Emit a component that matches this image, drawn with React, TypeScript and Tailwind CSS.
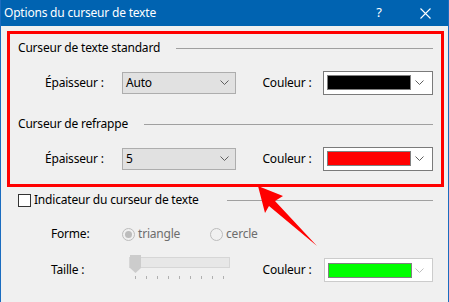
import React from "react";

const Chevron = ({ color = "#5f5f5f" }: { color?: string }) => (
  <svg width="9" height="5" viewBox="0 0 9 5" className="shrink-0">
    <polyline points="0.5,0.5 4.5,4.5 8.5,0.5" fill="none" stroke={color} strokeWidth="1" />
  </svg>
);

const SelectBox = ({ value }: { value: string }) => (
  <div className="w-[115px] h-[22px] bg-[#e1e1e1] border border-[#adadad] flex items-center pl-[3px] pr-[6px]">
    <span className="flex-1 text-black">{value}</span>
    <Chevron />
  </div>
);

const ColorBox = ({ color, disabled }: { color: string; disabled?: boolean }) => (
  <div
    className={`w-[110px] h-[24px] bg-white border flex items-center pl-[3px] pr-[5px] ${
      disabled ? "border-[#cccccc]" : "border-[#7a7a7a]"
    }`}
  >
    <div className="w-[84px] h-[15px] border border-[#808080]" style={{ backgroundColor: color }} />
    <div className="flex-1 flex justify-center">
      <Chevron color={disabled ? "#bfbfbf" : "#5f5f5f"} />
    </div>
  </div>
);

const Header = ({ text, w }: { text: string; w: string }) => (
  <div className="flex items-center h-[16px]">
    <div className={`${w} shrink-0 whitespace-nowrap`}>{text}</div>
    <div className="flex-1 h-px bg-[#a0a0a0]" />
  </div>
);

const Radio = ({ checked, label }: { checked?: boolean; label: string }) => (
  <div className="flex items-center gap-[3px]">
    <div className="w-[13px] h-[13px] rounded-full border border-[#bcbcbc] bg-[#f0f0f0] flex items-center justify-center">
      {checked && <div className="w-[7px] h-[7px] rounded-full bg-[#bcbcbc]" />}
    </div>
    <span className="text-[#6d6d6d]">{label}</span>
  </div>
);

const Slider = () => {
  const ticks = [0, 1, 2, 3, 4, 5, 6, 7, 8];
  return (
    <div className="relative w-[102px] h-[25px] mb-[5px]">
      <div className="absolute left-0 top-[2px] w-[101px] h-[11px] bg-[#e7e7e7] border border-[#d6d6d6]" />
      <svg className="absolute left-[1px] top-0" width="12" height="19" viewBox="0 0 12 19">
        <polygon points="0,0 11,0 11,13 5.5,18 0,13" fill="#cccccc" />
      </svg>
      {ticks.map((t) => (
        <div key={t} className="absolute top-[21px] w-px h-[3px] bg-[#b0b0b0]" style={{ left: 6 + t * 11 }} />
      ))}
    </div>
  );
};

export default function App() {
  return (
    <div
      className="relative w-[449px] h-[302px] bg-[#f0f0f0] border-x border-[#1a6cc0] text-[12px] text-black overflow-hidden"
      style={{ fontFamily: '"Noto Sans", "Liberation Sans", sans-serif', letterSpacing: "-0.2px" }}
    >
      <div className="h-[26px] bg-[#0063b1] flex items-center text-white pl-[3px]">
        <span className="flex-1 text-[12px]">Options du curseur de texte</span>
        <span className="w-[10px] text-center mr-[36px] text-[13px]">?</span>
        <svg width="11" height="11" viewBox="0 0 11 11" className="mr-[17px]">
          <path d="M0.5,0.5 L10.5,10.5 M10.5,0.5 L0.5,10.5" stroke="white" strokeWidth="1.1" />
        </svg>
      </div>

      <div className="pl-[17px] pr-[15px]">
        <div className="mt-[14px]">
          <Header text="Curseur de texte standard" w="w-[158px]" />
        </div>
        <div className="mt-[15px] flex items-center h-[23px]">
          <div className="w-[104px] pl-[27px] shrink-0">Épaisseur :</div>
          <SelectBox value="Auto" />
          <div className="w-[26px] shrink-0" />
          <div className="w-[61px] shrink-0">Couleur :</div>
          <ColorBox color="#000000" />
        </div>

        <div className="mt-[22px]">
          <Header text="Curseur de refrappe" w="w-[126px]" />
        </div>
        <div className="mt-[15px] flex items-center h-[23px]">
          <div className="w-[104px] pl-[27px] shrink-0">Épaisseur :</div>
          <SelectBox value="5" />
          <div className="w-[26px] shrink-0" />
          <div className="w-[61px] shrink-0">Couleur :</div>
          <ColorBox color="#ff0000" />
        </div>

        <div className="mt-[22px] flex items-center h-[16px]">
          <div className="w-[209px] shrink-0 flex items-center gap-[3px] whitespace-nowrap">
            <div className="w-[13px] h-[13px] border border-[#333333] bg-white" />
            <span>Indicateur du curseur de texte</span>
          </div>
          <div className="flex-1 h-px bg-[#a0a0a0]" />
        </div>

        <div className="mt-[18px] flex items-center h-[16px]">
          <div className="w-[104px] pl-[33px] shrink-0">Forme:</div>
          <div className="w-[88px] shrink-0">
            <Radio checked label="triangle" />
          </div>
          <Radio label="cercle" />
        </div>

        <div className="mt-[16px] flex items-center h-[24px]">
          <div className="w-[111px] pl-[33px] shrink-0">Taille :</div>
          <Slider />
          <div className="w-[32px] shrink-0" />
          <div className="w-[61px] shrink-0">Couleur :</div>
          <ColorBox color="#00ff00" disabled />
        </div>
      </div>

      <div className="absolute left-[6px] top-[31px] w-[437px] h-[156px] border-[3px] border-[#ff0000] pointer-events-none" />
      <svg className="absolute left-0 top-0 pointer-events-none" width="449" height="302" viewBox="0 0 449 302">
        <polygon points="257,186 282,196 274,201 316,246 268,206 264,213" fill="#ff0000" />
      </svg>
    </div>
  );
}
